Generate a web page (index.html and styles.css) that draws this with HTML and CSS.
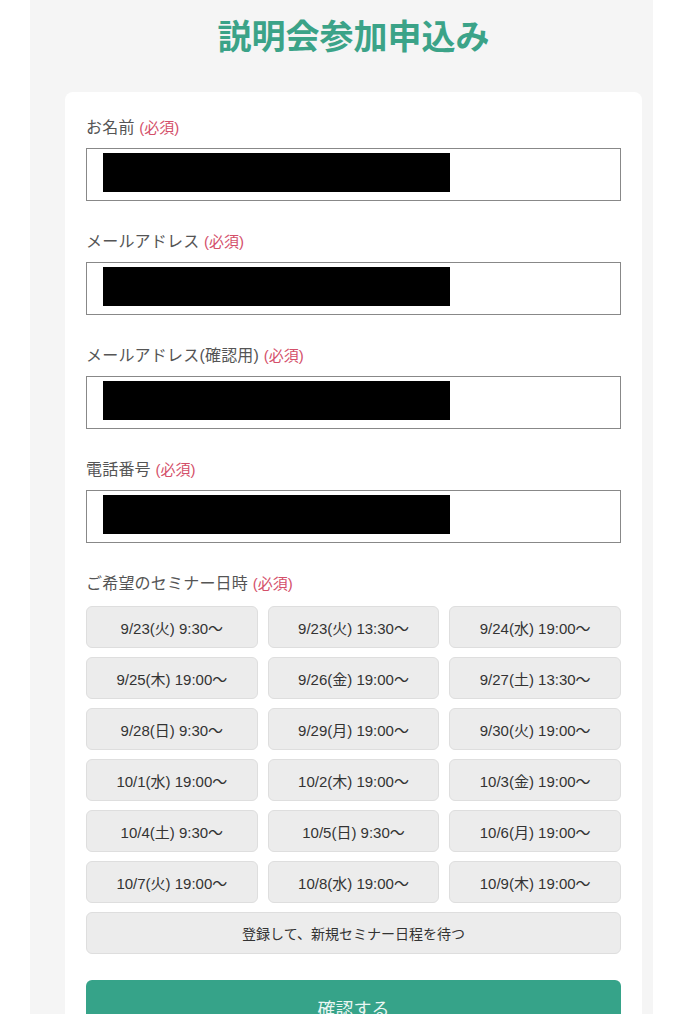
FILE: index.html
```html
<!DOCTYPE html>
<html lang="ja">
<head>
<meta charset="utf-8">
<title>説明会参加申込み</title>
<link rel="stylesheet" href="styles.css">
</head>
<body>
<div class="viewport">
  <div class="panel">
    <h1 class="title">説明会参加申込み</h1>
    <form class="card">
      <div class="field">
        <div class="label">お名前 <span class="req">(必須)</span></div>
        <div class="input"><span class="redact"></span></div>
      </div>
      <div class="field">
        <div class="label">メールアドレス <span class="req">(必須)</span></div>
        <div class="input"><span class="redact"></span></div>
      </div>
      <div class="field">
        <div class="label">メールアドレス(確認用) <span class="req">(必須)</span></div>
        <div class="input"><span class="redact"></span></div>
      </div>
      <div class="field">
        <div class="label">電話番号 <span class="req">(必須)</span></div>
        <div class="input"><span class="redact"></span></div>
      </div>
      <div class="field seminar">
        <div class="label">ご希望のセミナー日時 <span class="req">(必須)</span></div>
        <div class="slots">
          <button type="button" class="slot">9/23(火) 9:30〜</button>
          <button type="button" class="slot">9/23(火) 13:30〜</button>
          <button type="button" class="slot">9/24(水) 19:00〜</button>
          <button type="button" class="slot">9/25(木) 19:00〜</button>
          <button type="button" class="slot">9/26(金) 19:00〜</button>
          <button type="button" class="slot">9/27(土) 13:30〜</button>
          <button type="button" class="slot">9/28(日) 9:30〜</button>
          <button type="button" class="slot">9/29(月) 19:00〜</button>
          <button type="button" class="slot">9/30(火) 19:00〜</button>
          <button type="button" class="slot">10/1(水) 19:00〜</button>
          <button type="button" class="slot">10/2(木) 19:00〜</button>
          <button type="button" class="slot">10/3(金) 19:00〜</button>
          <button type="button" class="slot">10/4(土) 9:30〜</button>
          <button type="button" class="slot">10/5(日) 9:30〜</button>
          <button type="button" class="slot">10/6(月) 19:00〜</button>
          <button type="button" class="slot">10/7(火) 19:00〜</button>
          <button type="button" class="slot">10/8(水) 19:00〜</button>
          <button type="button" class="slot">10/9(木) 19:00〜</button>
          <button type="button" class="slot wide">登録して、新規セミナー日程を待つ</button>
        </div>
      </div>
      <button type="button" class="submit">確認する</button>
    </form>
  </div>
</div>
</body>
</html>
```
FILE: styles.css
```css
html, body {
  margin: 0;
  padding: 0;
  background: #ffffff;
}
body {
  font-family: "Liberation Sans", "Noto Sans CJK JP", sans-serif;
  color: #444;
}
.viewport {
  height: 1014px;
  overflow: hidden;
}
.panel {
  margin-left: 30px;
  width: 623px;
  box-sizing: border-box;
  padding: 0 11px 40px 35px;
  background: #f5f5f5;
  min-height: 1014px;
}
.title {
  margin: 0;
  padding-top: 13px;
  height: 92px;
  box-sizing: border-box;
  text-align: center;
  font-family: "Noto Sans CJK JP", sans-serif;
  font-size: 34px;
  line-height: 44px;
  font-weight: 700;
  color: #3ba388;
  letter-spacing: 0;
}
.card {
  display: flex;
  flex-direction: column;
  background: #ffffff;
  border-radius: 8px;
  padding: 26px 21px 40px;
}
.field {
  display: flex;
  flex-direction: column;
  gap: 10px;
  margin-bottom: 31px;
}
.field.seminar {
  gap: 12px;
  margin-top: 0;
  margin-bottom: 26px;
}
.label {
  font-size: 16px;
  line-height: 20px;
  color: #555;
  letter-spacing: 0.2px;
  font-family: "Liberation Sans", "Noto Sans CJK JP", sans-serif;
}
.req {
  color: #d4506a;
  font-size: 15px;
  font-weight: 400;
  letter-spacing: 0;
  font-family: "Liberation Sans", "Noto Sans CJK JP", sans-serif;
}
.input {
  height: 53px;
  box-sizing: border-box;
  border: 1.5px solid #888;
  background: #fff;
  padding: 3.5px 0 0 15.5px;
}
.redact {
  display: block;
  width: 347px;
  height: 39px;
  background: #000;
}
.slots {
  display: grid;
  grid-template-columns: repeat(3, 1fr);
  gap: 9px 10px;
}
.slot {
  height: 42px;
  margin: 0;
  border: 1px solid #dedede;
  border-radius: 6px;
  background: #ececec;
  color: #333;
  font-family: "Liberation Sans", "Noto Sans CJK JP", sans-serif;
  font-size: 15px;
  padding: 0;
  cursor: pointer;
}
.slot.wide {
  grid-column: 1 / -1;
  font-family: "Noto Sans CJK JP", sans-serif;
  font-size: 14px;
}
.submit {
  height: 56px;
  margin: 0;
  border: none;
  border-radius: 6px;
  background: #36a389;
  color: #e9f6f2;
  font-family: "Noto Sans CJK JP", sans-serif;
  font-size: 18px;
  padding: 0;
}
```
